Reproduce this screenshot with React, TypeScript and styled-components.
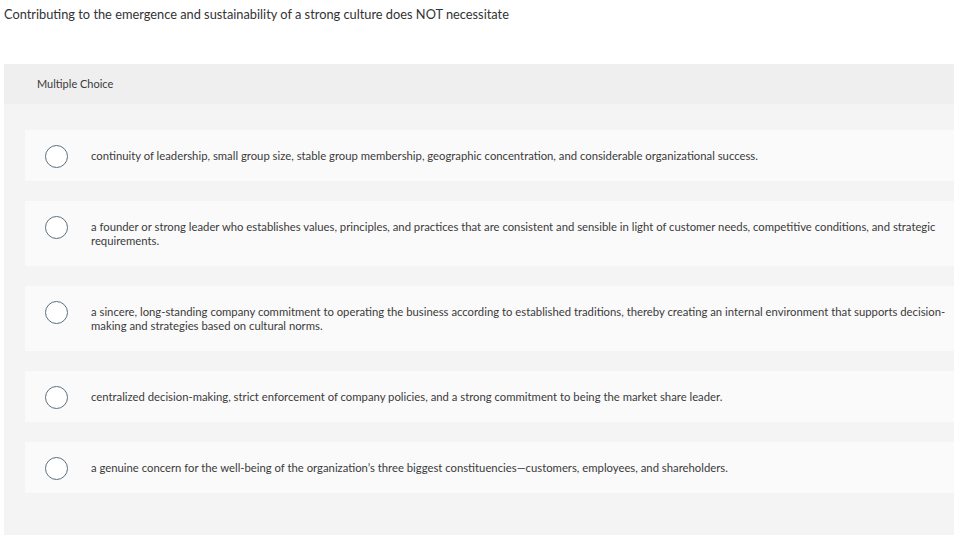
import React from "react"
import styled, { createGlobalStyle } from "styled-components"

const GlobalStyle = createGlobalStyle`
  html, body {
    margin: 0;
    padding: 0;
    background: #ffffff;
  }
  body {
    font-family: Lato, "Open Sans", Arial, sans-serif;
    color: #333333;
  }
`

const Page = styled.div`
  width: 954px;
  height: 535px;
  overflow: hidden;
  display: flex;
  flex-direction: column;
`

const Question = styled.p`
  margin: 0;
  padding: 6px 0 0 4px;
  height: 64px;
  flex: none;
  box-sizing: border-box;
  font-size: 12.8px;
  line-height: 16px;
  color: #333333;
`

const Panel = styled.section`
  margin-left: 4px;
  flex: 1;
  display: flex;
  flex-direction: column;
  background: #f4f4f4;
`

const PanelHeader = styled.div`
  height: 40px;
  display: flex;
  align-items: center;
  padding: 0 0 2px 33px;
  box-sizing: border-box;
  background: #efefef;
  font-size: 11px;
  color: #3a3a3a;
`

const Options = styled.div`
  display: flex;
  flex-direction: column;
  gap: 20px;
  padding: 26px 0 0 21px;
`

const Option = styled.label`
  display: flex;
  align-items: flex-start;
  gap: 23px;
  padding: 19px 4px 18px 20px;
  background: #fafafa;
  cursor: pointer;
`

const Radio = styled.span`
  flex: none;
  width: 23px;
  height: 23px;
  margin: -4.5px 0 -4.5px;
  box-sizing: border-box;
  border: 1.5px solid #5b6f7c;
  border-radius: 50%;
  background: #ffffff;
`

const OptionText = styled.span`
  font-size: 11.3px;
  line-height: 14px;
  color: #3a3a3a;
`

const choices = [
  "continuity of leadership, small group size, stable group membership, geographic concentration, and considerable organizational success.",
  "a founder or strong leader who establishes values, principles, and practices that are consistent and sensible in light of customer needs, competitive conditions, and strategic requirements.",
  "a sincere, long-standing company commitment to operating the business according to established traditions, thereby creating an internal environment that supports decision-making and strategies based on cultural norms.",
  "centralized decision-making, strict enforcement of company policies, and a strong commitment to being the market share leader.",
  "a genuine concern for the well-being of the organization’s three biggest constituencies—customers, employees, and shareholders.",
]

export default function App() {
  return (
    <>
      <GlobalStyle />
      <Page>
        <Question>
          Contributing to the emergence and sustainability of a strong culture does NOT necessitate
        </Question>
        <Panel>
          <PanelHeader>Multiple Choice</PanelHeader>
          <Options>
            {choices.map((c) => (
              <Option key={c}>
                <Radio />
                <OptionText>{c}</OptionText>
              </Option>
            ))}
          </Options>
        </Panel>
      </Page>
    </>
  )
}
